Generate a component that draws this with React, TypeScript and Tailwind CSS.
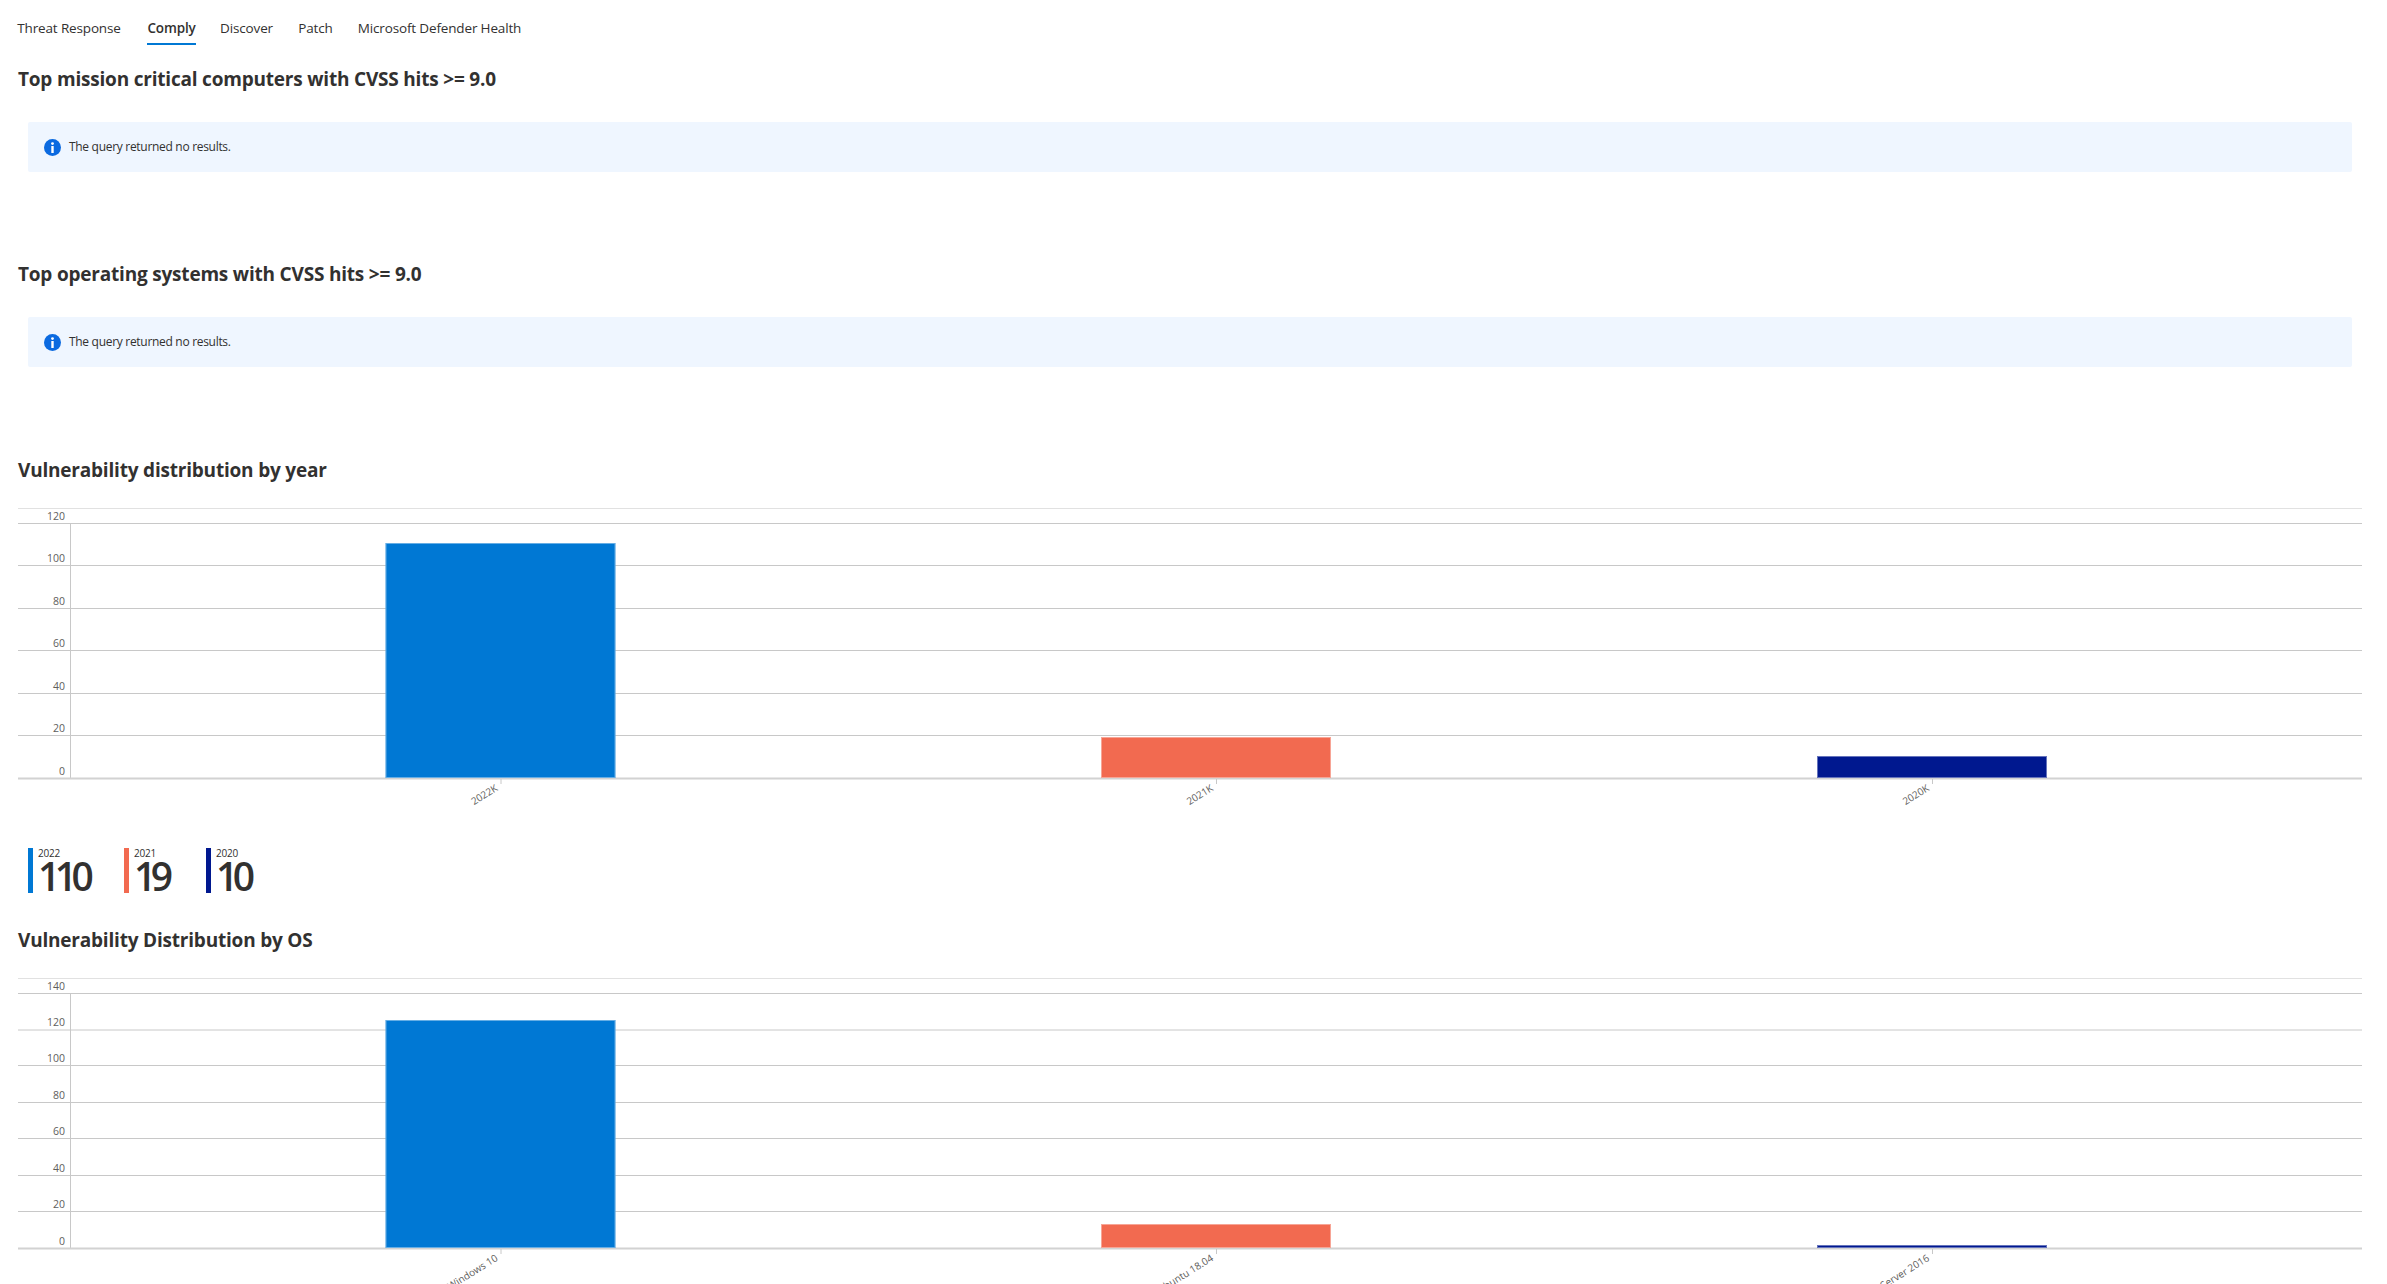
const chartWidth = 2344;
const font = "font-['Open_Sans','Noto_Sans',sans-serif]";

const tabs = [
  { label: "Threat Response", width: "w-[102px]", gap: "mr-[27px]" },
  { label: "Comply", width: "w-[49px]", gap: "mr-[24px]", active: true },
  { label: "Discover", width: "w-[53px]", gap: "mr-[26px]" },
  { label: "Patch", width: "w-[33px]", gap: "mr-[26px]" },
  { label: "Microsoft Defender Health", width: "w-[163px]", gap: "" },
];

type Bar = { label: string; x: number; top: number; color: string };
type Tick = { label: string; y: number };

const yearTicks: Tick[] = [
  { label: "120", y: 15 },
  { label: "100", y: 57 },
  { label: "80", y: 100 },
  { label: "60", y: 142 },
  { label: "40", y: 185 },
  { label: "20", y: 227 },
  { label: "0", y: 270 },
];

const yearBars: Bar[] = [
  { label: "2022K", x: 367.5, top: 35, color: "#0078d4" },
  { label: "2021K", x: 1083, top: 229, color: "#f26a50" },
  { label: "2020K", x: 1799, top: 248, color: "#00188f" },
];

const osTicks: Tick[] = [
  { label: "140", y: 15 },
  { label: "120", y: 51.5 },
  { label: "100", y: 87 },
  { label: "80", y: 124 },
  { label: "60", y: 160 },
  { label: "40", y: 197 },
  { label: "20", y: 233 },
  { label: "0", y: 270 },
];

const osBars: Bar[] = [
  { label: "Windows 10", x: 367.5, top: 42, color: "#0078d4" },
  { label: "Ubuntu 18.04", x: 1083, top: 246, color: "#f26a50" },
  { label: "Windows Server 2016", x: 1799, top: 267, color: "#00188f" },
];

const legend = [
  { year: "2022", value: "110", color: "bg-[#0078d4]", width: "w-[96px]" },
  { year: "2021", value: "19", color: "bg-[#f26a50]", width: "w-[82px]" },
  { year: "2020", value: "10", color: "bg-[#00188f]", width: "w-[70px]" },
];

const InfoIcon = () => (
  <svg width="17" height="17" viewBox="0 0 17 17" className="shrink-0">
    <circle cx="8.5" cy="8.5" r="8.5" fill="#0b6ae0" />
    <circle cx="8.5" cy="4.6" r="1.4" fill="#fff" />
    <rect x="7.3" y="7" width="2.4" height="7" fill="#fff" />
  </svg>
);

const Heading = ({ children }: { children: string }) => (
  <h2 className="h-[28px] text-[19px] leading-[28px] font-bold tracking-[-0.2px] text-[#323130]">{children}</h2>
);

const NoResults = () => (
  <div className="mx-[10px] mt-[29px] flex h-[50px] items-center gap-[8px] rounded-[2px] bg-[#eff6ff] pl-[16px]">
    <InfoIcon />
    <span className="text-[12px] tracking-[-0.3px] text-[#323130]">The query returned no results.</span>
  </div>
);

const Chart = ({ ticks, bars, height }: { ticks: Tick[]; bars: Bar[]; height: number }) => {
  const base = 270;
  const axisTop = ticks[0].y;
  return (
    <svg width={chartWidth} height={height} className="mt-[24px] block">
      <line x1="0" x2={chartWidth} y1="0.5" y2="0.5" stroke="#e1e1e1" />
      {ticks.map((t) => (
        <g key={t.label}>
          <line x1="0" x2={chartWidth} y1={t.y + 0.5} y2={t.y + 0.5} stroke="#c8c8c8" />
          <text x="47" y={t.y - 3.5} textAnchor="end" fontSize="10.5" fill="#605e5c" fontFamily="'Open Sans'">
            {t.label}
          </text>
        </g>
      ))}
      <line x1="52.5" x2="52.5" y1={axisTop} y2={base} stroke="#c8c8c8" />
      <rect x="0" y={base - 0.5} width={chartWidth} height="2" fill="#d2d2d2" />
      {bars.map((b) => {
        const center = b.x + 115;
        return (
          <g key={b.label}>
            <rect x={b.x} y={b.top} width="230" height={base - b.top} fill={b.color} />
            <rect
              x={b.x + 0.5}
              y={b.top + 0.5}
              width="229"
              height={base - b.top - 1}
              fill="none"
              stroke="#fff"
              strokeOpacity="0.4"
            />
            <line x1={center + 0.5} x2={center + 0.5} y1={base + 1} y2={base + 6} stroke="#c8c8c8" />
            <text
              x={center - 2}
              y={base + 12}
              textAnchor="end"
              fontSize="10"
              fill="#605e5c"
              fontFamily="'Open Sans'"
              transform={`rotate(-32 ${center - 2} ${base + 12})`}
            >
              {b.label}
            </text>
          </g>
        );
      })}
    </svg>
  );
};

export default function App() {
  return (
    <div className={`h-screen overflow-hidden bg-white pl-[18px] pr-[25px] text-[#323130] ${font}`}>
      {/* Tabs */}
      <nav className="flex h-[45px] items-end">
        {tabs.map((t) => (
          <div
            key={t.label}
            className={`flex h-[45px] shrink-0 flex-col items-center ${t.width} ${t.gap} ${
              t.active ? "border-b-2 border-[#0078d4] font-semibold" : ""
            }`}
          >
            <span className="mt-[18px] whitespace-nowrap text-[13.5px] leading-[20px] tracking-[-0.15px]">{t.label}</span>
          </div>
        ))}
      </nav>

      <section className="mt-[20px] h-[195px]">
        <Heading>Top mission critical computers with CVSS hits &gt;= 9.0</Heading>
        <NoResults />
      </section>

      <section className="h-[196px]">
        <Heading>Top operating systems with CVSS hits &gt;= 9.0</Heading>
        <NoResults />
      </section>

      <section>
        <Heading>Vulnerability distribution by year</Heading>
        <Chart ticks={yearTicks} bars={yearBars} height={316} />
      </section>

      {/* Legend */}
      <div className="ml-[10px] mt-[24px] flex h-[45px]">
        {legend.map((l) => (
          <div key={l.year} className={`flex ${l.width}`}>
            <div className={`h-[45px] w-[5px] ${l.color}`} />
            <div className="ml-[5px] flex flex-col">
              <span className="h-[11px] text-[10px] leading-[11px] tracking-[-0.2px] text-[#323130]">{l.year}</span>
              <span className="text-[39px] leading-[34px] font-semibold tracking-[-5.5px] text-[#323130]">{l.value}</span>
            </div>
          </div>
        ))}
      </div>

      <section className="mt-[33px]">
        <Heading>Vulnerability Distribution by OS</Heading>
        <Chart ticks={osTicks} bars={osBars} height={340} />
      </section>
    </div>
  );
}
